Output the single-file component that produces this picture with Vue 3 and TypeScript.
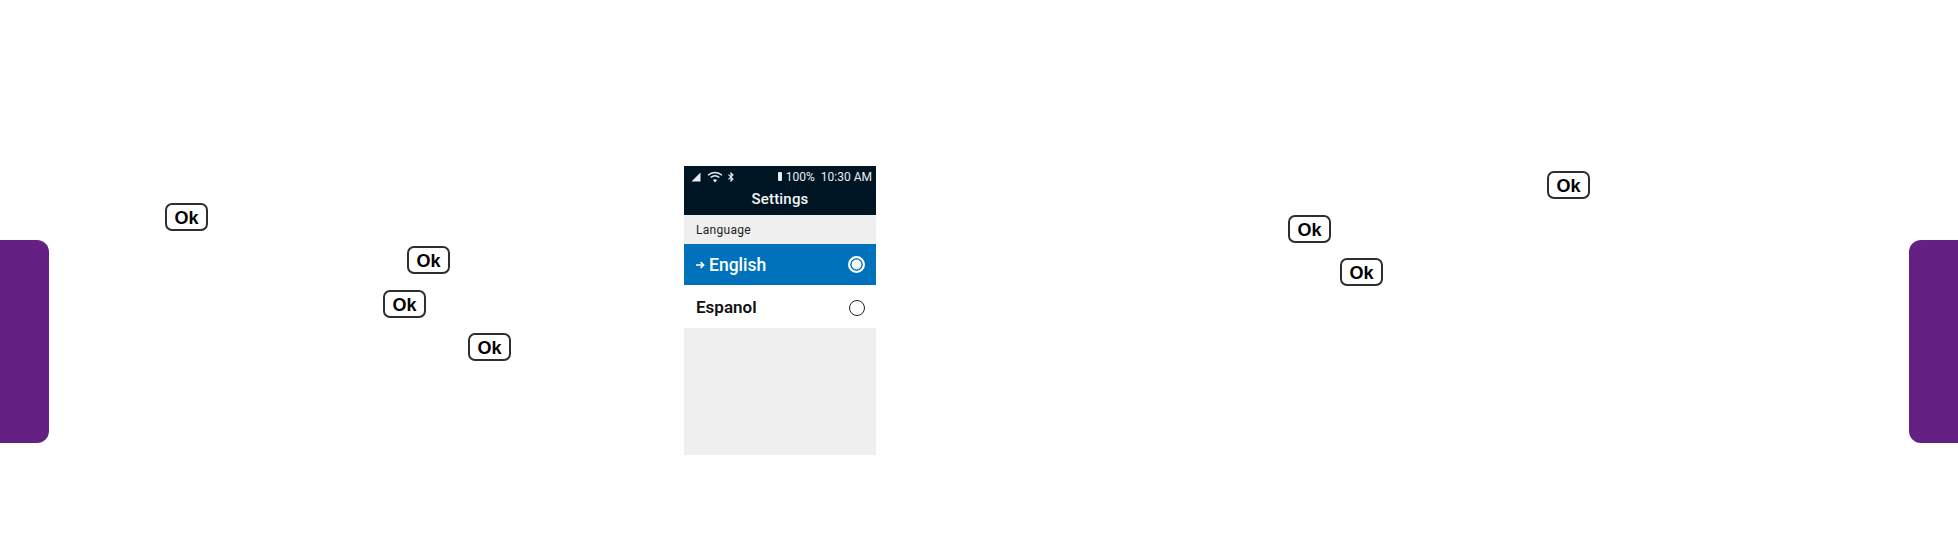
<script setup lang="ts">
const leftOk: string[] = ['l1', 'l2', 'l3', 'l4']
const rightOk: string[] = ['r1', 'r2', 'r3']
</script>

<template>
  <div class="page">
    <div class="tab tab-left"></div>
    <div class="tab tab-right"></div>

    <div class="side side-left">
      <div v-for="k in leftOk" :key="k" class="ok-row" :class="k"><span class="ok">Ok</span></div>
    </div>

    <div class="phone">
      <div class="topbar">
        <div class="status">
          <svg class="signal" width="10" height="10" viewBox="0 0 10 10"><path d="M9.5 0.5V9.5H0.5Z" fill="#e8edf0" /></svg>
          <svg class="wifi" width="16" height="12" viewBox="0 0 16 12" fill="none" stroke="#e8edf0" stroke-width="1.3">
            <path d="M1 4.2C5 .6 11 .6 15 4.2" />
            <path d="M3.6 6.6C6.2 4.4 9.8 4.4 12.4 6.6" />
            <path d="M8 11.4 5.9 8.9C7.1 7.9 8.9 7.9 10.1 8.9Z" fill="#e8edf0" stroke="none" />
          </svg>
          <svg class="bt" width="6" height="10" viewBox="0 0 6 10" fill="none" stroke="#e8edf0" stroke-width="1.1">
            <path d="M.4 2.6 5 6.9 3 9V1L5 3.1.4 7.4" />
          </svg>
          <span class="batt"></span>
          <span class="pct">100%</span>
          <span class="time">10:30 AM</span>
        </div>
        <div class="title">Settings</div>
      </div>
      <div class="section">Language</div>
      <div class="item selected">
        <svg class="arrow" width="9" height="8" viewBox="0 0 9 8" fill="none" stroke="#fff" stroke-width="1.6">
          <path d="M0 4H7M4.6 1.2 7.6 4 4.6 6.8" />
        </svg>
        <span class="item-label">English</span>
        <span class="radio on"></span>
      </div>
      <div class="item plain">
        <span class="item-label">Espanol</span>
        <span class="radio off"></span>
      </div>
      <div class="rest"></div>
    </div>

    <div class="side side-right">
      <div v-for="k in rightOk" :key="k" class="ok-row" :class="k"><span class="ok">Ok</span></div>
    </div>
  </div>
</template>

<style>
html, body { margin: 0; background: #fff; }
</style>

<style scoped>
.page {
  position: relative;
  width: 1958px;
  height: 540px;
  display: flex;
  background: #fff;
  overflow: hidden;
  font-family: Roboto, "Liberation Sans", sans-serif;
}
.tab {
  position: absolute;
  top: 240px;
  width: 49px;
  height: 203px;
  background: #642082;
}
.tab-left { left: 0; border-radius: 0 12px 12px 0; }
.tab-right { right: 0; border-radius: 12px 0 0 12px; }

.side { display: flex; flex-direction: column; box-sizing: border-box; }
.side-left { width: 684px; padding-top: 203px; gap: 15.3px; }
.side-right { width: 1082px; padding-top: 171px; gap: 15.5px; }
.ok-row { display: flex; height: 28px; }
.l1 { padding-left: 165px; }
.l2 { padding-left: 407px; }
.l3 { padding-left: 383px; }
.l4 { padding-left: 468px; }
.r1 { padding-left: 671px; }
.r2 { padding-left: 412px; }
.r3 { padding-left: 464px; }
.ok {
  box-sizing: border-box;
  width: 43px;
  height: 28px;
  border: 2px solid #2e2e2e;
  border-radius: 7px;
  background: #fff;
  color: #000;
  font: 700 18px/26px "Liberation Sans", Arial, sans-serif;
  text-align: center;
}

.phone { width: 192px; height: 289px; margin-top: 166px; display: flex; flex-direction: column; }
.topbar { height: 49px; background: #001524; color: #e8edf0; flex: none; }
.status {
  height: 21px;
  display: flex;
  align-items: center;
  padding: 0 4px 0 7px;
  font-size: 12px;
}
.wifi { margin-left: 6px; }
.bt { margin-left: 5px; }
.batt {
  margin-left: auto;
  width: 4px;
  height: 9px;
  border-radius: 1px;
  background: #e8edf0;
}
.pct { margin-left: 4px; }
.time { margin-left: 6px; }
.title {
  text-align: center;
  font-size: 15px;
  font-weight: 500;
  letter-spacing: .2px;
  line-height: 25px;
  color: #f2f5f7;
}
.section {
  flex: none;
  height: 29px;
  line-height: 30px;
  padding-left: 12px;
  background: #efefef;
  color: #222;
  font-size: 12px;
  letter-spacing: .3px;
}
.item {
  flex: none;
  display: flex;
  align-items: center;
  padding: 0 11px 0 12px;
}
.selected { height: 41px; background: #0072bc; color: #fff; font-size: 17.5px; font-weight: 500; }
.plain { height: 43px; background: #fff; color: #111; font-size: 17px; font-weight: 600; }
.arrow { margin-right: 4px; }
.item-label { flex: 1; }
.radio {
  box-sizing: border-box;
  width: 16px;
  height: 16px;
  border: 1.5px solid #222;
  border-radius: 50%;
}
.radio.off { margin-top: 3px; }
.radio.on {
  width: 17px;
  height: 17px;
  border: 2px solid #fff;
  background: #fff;
  box-shadow: inset 0 0 0 1.6px #0072bc;
}
.rest { flex: 1; background: #efefef; }
</style>
